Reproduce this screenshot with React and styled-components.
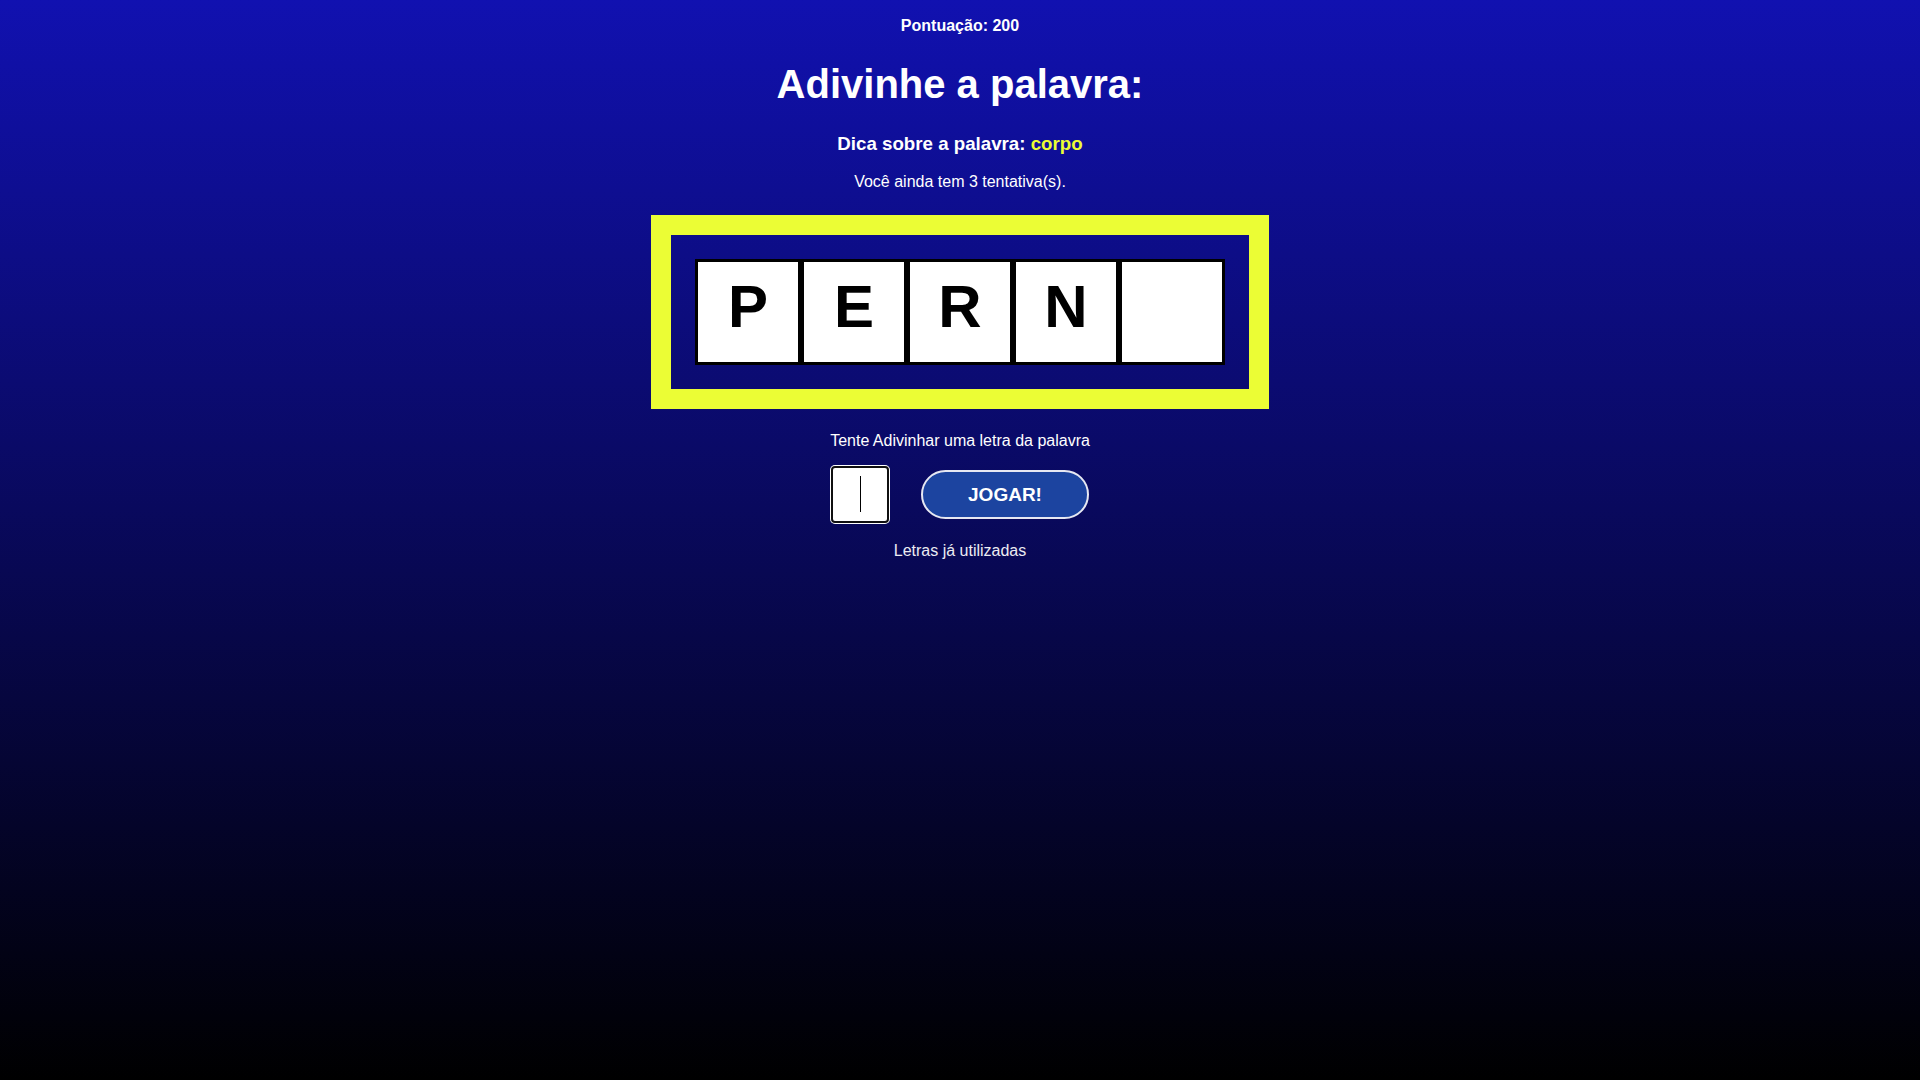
import { useState } from 'react';
import styled, { createGlobalStyle } from 'styled-components';

const GlobalStyle = createGlobalStyle`
  html, body {
    margin: 0;
    padding: 0;
  }

  body {
    min-height: 100vh;
    background: linear-gradient(to bottom, #1111b0, #000000);
    font-family: "Liberation Sans", Arial, sans-serif;
    color: #ffffff;
  }
`;

const palavra = ['P', 'E', 'R', 'N', ''];

export default function App() {
  const [letra, setLetra] = useState('');

  return (
    <>
      <GlobalStyle />
      <Page>
        <Score>Pontuação: 200</Score>
        <Title>Adivinhe a palavra:</Title>
        <Hint>
          Dica sobre a palavra: <HintWord>corpo</HintWord>
        </Hint>
        <Tries>Você ainda tem 3 tentativa(s).</Tries>

        <Board>
          <Tiles>
            {palavra.map((l, i) => (
              <Tile key={i}>{l}</Tile>
            ))}
          </Tiles>
        </Board>

        <Prompt>Tente Adivinhar uma letra da palavra</Prompt>
        <GuessRow>
          <InputWrap $empty={letra === ''}>
            <LetterInput
              type="text"
              maxLength={1}
              value={letra}
              onChange={e => setLetra(e.target.value)}
            />
          </InputWrap>
          <PlayButton>JOGAR!</PlayButton>
        </GuessRow>
        <UsedLetters>Letras já utilizadas</UsedLetters>
      </Page>
    </>
  );
}

const Page = styled.div`
  display: flex;
  flex-direction: column;
  align-items: center;
  padding-top: 17px;
  text-align: center;
`;

const Score = styled.p`
  margin: 0;
  font-size: 16px;
  font-weight: bold;
`;

const Title = styled.h1`
  margin: 27px 0 0;
  font-size: 40px;
  font-weight: bold;
`;

const Hint = styled.h3`
  margin: 26px 0 0;
  font-size: 18.72px;
  font-weight: bold;
`;

const HintWord = styled.span`
  color: #ecfc34;
`;

const Tries = styled.p`
  margin: 18px 0 0;
  font-size: 16px;
`;

const Board = styled.div`
  margin-top: 24px;
  padding: 24px;
  border: 20px solid #ebfd35;
`;

const Tiles = styled.div`
  display: flex;
`;

const Tile = styled.div`
  width: 100px;
  height: 100px;
  border: 3px solid #000000;
  background: #ffffff;
  color: #000000;
  font-size: 60px;
  font-weight: bold;
  line-height: 90px;
  text-align: center;
`;

const Prompt = styled.p`
  margin: 23px 0 0;
  font-size: 16px;
`;

const GuessRow = styled.div`
  display: flex;
  align-items: center;
  gap: 32px;
  margin-top: 16px;
`;

const InputWrap = styled.div`
  position: relative;
  display: flex;

  &::after {
    content: "";
    display: ${props => (props.$empty ? 'block' : 'none')};
    position: absolute;
    left: 29px;
    top: 10px;
    width: 1px;
    height: 36px;
    background: #000000;
    pointer-events: none;
  }
`;

const LetterInput = styled.input`
  box-sizing: border-box;
  width: 58px;
  height: 57px;
  padding: 0;
  border: 2px solid #101010;
  border-radius: 4px;
  box-shadow: 0 0 0 1px #ffffff;
  outline: none;
  background: #ffffff;
  color: #000000;
  font-family: "Liberation Sans", Arial, sans-serif;
  font-size: 32px;
  text-align: center;
  caret-color: #000000;
`;

const PlayButton = styled.button`
  box-sizing: border-box;
  width: 168px;
  height: 49px;
  border: 2px solid #e6e8f2;
  border-radius: 25px;
  background: #1c44a0;
  color: #ffffff;
  font-family: "Liberation Sans", Arial, sans-serif;
  font-size: 19px;
  font-weight: bold;
  cursor: pointer;
`;

const UsedLetters = styled.p`
  margin: 19px 0 0;
  font-size: 16px;
  color: #ececf2;
`;
